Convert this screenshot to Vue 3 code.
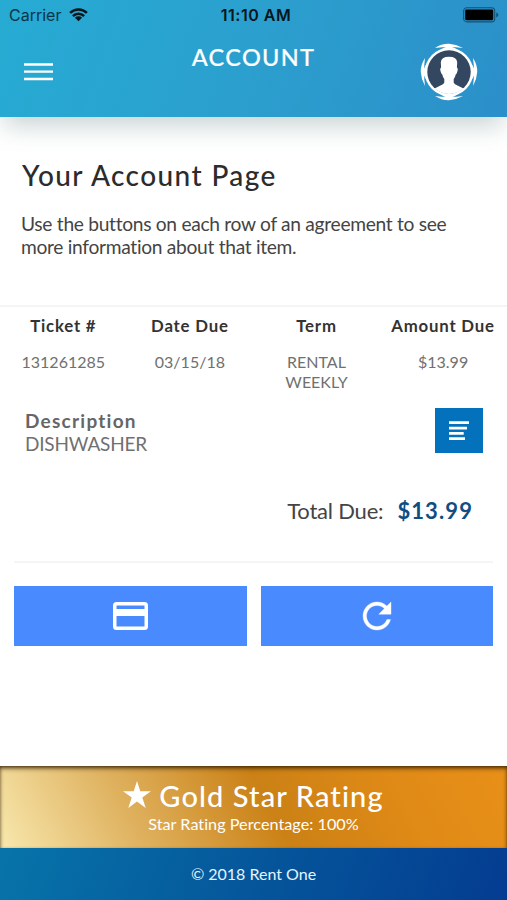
<script setup>
const columns = [
  { label: 'Ticket #', value: '131261285' },
  { label: 'Date Due', value: '03/15/18' },
  { label: 'Term', value: 'RENTAL WEEKLY' },
  { label: 'Amount Due', value: '$13.99' },
]
</script>

<template>
  <div class="screen">
    <header class="header">
      <div class="status">
        <div class="carrier">
          <span class="carrier-name">Carrier</span>
          <svg class="wifi" viewBox="0 0 20 15">
            <path d="M1 5.2a12.8 12.8 0 0 1 18 0M4 8.6a8.5 8.5 0 0 1 12 0" fill="none" stroke="#07151c" stroke-width="2.7" />
            <path d="M6.2 10.4a5.4 5.4 0 0 1 7.6 0L10 14.2z" fill="#07151c" />
          </svg>
        </div>
        <span class="time">11:10 AM</span>
        <svg class="battery" viewBox="0 0 36 16">
          <rect x=".7" y=".7" width="31" height="14.2" rx="3.2" fill="none" stroke="#155273" stroke-width="1.1" />
          <rect x="2.2" y="2.4" width="28" height="10.9" rx="1.4" fill="#000" />
          <path d="M33.2 5.4c2.8.8 2.8 4 0 4.8z" fill="#155273" />
        </svg>
      </div>
      <div class="bar">
        <svg class="menu" viewBox="0 0 29 18">
          <path d="M0 1.5h29M0 8.7h29M0 16h29" stroke="#fff" stroke-width="2.3" />
        </svg>
        <h1 class="title">ACCOUNT</h1>
        <svg class="avatar" viewBox="0 0 58 58">
          <defs>
            <clipPath id="face"><circle cx="29" cy="29" r="22" /></clipPath>
          </defs>
          <g fill="#fff">
            <path d="M15 5Q22 .5 29 .8T43 5Q36 4 29 4T15 5z" />
            <path d="M15 53Q22 57.5 29 57.2T43 53Q36 54 29 54T15 53z" />
            <path d="M5 15Q.5 22 .8 29T5 43Q4 36 4 29T5 15z" />
            <path d="M53 15Q57.5 22 57.2 29T53 43Q54 36 54 29T53 15z" />
            <circle cx="29" cy="29" r="24.2" />
            <path d="M19 8Q29 -1 39 8zM19 50Q29 59 39 50zM8 19Q-1 29 8 39zM50 19Q59 29 50 39z" />
          </g>
          <circle cx="29" cy="29" r="21.7" fill="#344760" />
          <path clip-path="url(#face)" fill="#fff" d="M20.8 19.5Q21 13.7 29 13.7T37.2 19.5L36.9 24.5Q38.5 25.5 37.2 29Q36.6 31 35.7 31.5Q35.3 34 33.7 36V39.5Q34 41 38.5 43L44 45.8Q46 47 46 52H12Q12 47 14 45.8L19.5 43Q24 41 24.3 39.5V36Q22.7 34 22.3 31.5Q21.4 31 20.8 29Q19.5 25.5 21.1 24.5z" />
        </svg>
      </div>
    </header>

    <main class="content">
      <section class="intro">
        <h2 class="heading">Your Account Page</h2>
        <p class="lead">Use the buttons on each row of an agreement to see more information about that item.</p>
      </section>

      <section class="agreement">
        <div class="grid">
          <div v-for="c in columns" :key="c.label" class="col">
            <div class="label">{{ c.label }}</div>
            <div class="value">{{ c.value }}</div>
          </div>
        </div>
        <div class="item">
          <div>
            <div class="desc-label">Description</div>
            <div class="desc">DISHWASHER</div>
          </div>
          <button class="details" aria-label="Details">
            <svg viewBox="0 0 20 20">
              <path d="M0 1.6h20M0 7.1h18M0 12.3h14.7M0 17.7h16" stroke="#fff" stroke-width="2.8" />
            </svg>
          </button>
        </div>
        <div class="total">
          <span class="total-label">Total Due:</span>
          <span class="total-value">$13.99</span>
        </div>
      </section>

      <div class="actions">
        <button class="action" aria-label="Pay">
          <svg class="card" viewBox="0 0 35 28">
            <path fill="#fff" fill-rule="evenodd" d="M3.5 0h28Q35 0 35 3.5v21Q35 28 31.5 28h-28Q0 28 0 24.5v-21Q0 0 3.5 0zM3.5 3.5v3.5h28V3.5zM3.5 14v10.5h28V14z" />
          </svg>
        </button>
        <button class="action" aria-label="Refresh">
          <svg class="refresh" viewBox="4 4 16 16">
            <path fill="#fff" stroke="#fff" stroke-width=".2" d="M17.65 6.35C16.2 4.9 14.21 4 12 4c-4.42 0-7.99 3.58-7.99 8s3.57 8 7.99 8c3.73 0 6.84-2.55 7.73-6h-2.08c-.82 2.33-3.04 4-5.65 4-3.31 0-6-2.69-6-6s2.69-6 6-6c1.66 0 3.14.69 4.22 1.78L13 11h7V4l-2.35 2.35z" />
          </svg>
        </button>
      </div>
    </main>

    <section class="rating">
      <div class="rating-title">
        <svg class="star" viewBox="0 0 28 27">
          <path fill="#fff" d="M14 0l3.3 10.2H28l-8.7 6.4L22.7 27 14 20.6 5.3 27l3.4-10.4L0 10.2h10.7z" />
        </svg>
        <span>Gold Star Rating</span>
      </div>
      <div class="rating-sub">Star Rating Percentage: 100%</div>
    </section>
    <footer class="footer">© 2018 Rent One</footer>
  </div>
</template>

<style>
body {
  margin: 0;
  background: #fff;
}
</style>

<style scoped>
.screen {
  width: 507px;
  height: 900px;
  display: flex;
  flex-direction: column;
  overflow: hidden;
  background: #fff;
  color: #333;
  font-family: Lato, sans-serif;
}
h1, h2, p {
  margin: 0;
}
svg {
  display: block;
}
button {
  border: 0;
  padding: 0;
  display: flex;
  align-items: center;
  justify-content: center;
}
.header {
  box-sizing: border-box;
  height: 117px;
  flex: none;
  background: linear-gradient(110deg, #26abd3 0%, #2b9fce 50%, #2b8fc9 100%);
  box-shadow: 0 12px 24px -4px rgba(80, 112, 116, .32);
}
.status {
  height: 30px;
  padding: 0 8px 0 9px;
  display: grid;
  grid-template-columns: 1fr auto 1fr;
  align-items: center;
  font-family: Inter, sans-serif;
  font-size: 16px;
  color: #07151c;
}
.carrier {
  display: flex;
  align-items: center;
  gap: 8px;
}
.carrier-name {
  color: #0c3447;
}
.wifi {
  width: 19px;
  height: 14px;
}
.time {
  padding-left: 4px;
  font-weight: 600;
  letter-spacing: .5px;
}
.battery {
  width: 36px;
  height: 16px;
  justify-self: end;
}
.bar {
  height: 87px;
  padding: 0 29px 0 24px;
  display: grid;
  grid-template-columns: 1fr auto 1fr;
}
.menu {
  width: 29px;
  height: 18px;
  margin-top: 33px;
}
.title {
  margin-top: 12px;
  padding-left: 5px;
  color: #fff;
  font-size: 23.5px;
  line-height: 30px;
  font-weight: 500;
  letter-spacing: 1.3px;
  -webkit-text-stroke: .2px #fff;
}
.avatar {
  width: 58px;
  height: 58px;
  margin-top: 13px;
  justify-self: end;
}
.content {
  flex: 1;
}
.intro {
  box-sizing: border-box;
  height: 188px;
  padding: 41px 40px 0 21px;
}
.heading {
  padding-left: 1px;
  font-size: 28px;
  line-height: 34px;
  font-weight: 500;
  letter-spacing: 1.4px;
  color: #2c2c2c;
}
.lead {
  margin-top: 20px;
  font-size: 19.2px;
  line-height: 23px;
  letter-spacing: -.3px;
  color: #444;
}
.agreement {
  box-sizing: border-box;
  height: 256px;
  border-top: 2px solid #f5f5f5;
}
.grid {
  height: 100px;
  display: grid;
  grid-template-columns: repeat(4, 126.6px);
  text-align: center;
}
.label {
  margin-top: 8px;
  font-size: 16.8px;
  line-height: 22px;
  font-weight: 700;
  letter-spacing: .8px;
  white-space: nowrap;
}
.value {
  margin: 15px 20px 0;
  font-size: 16px;
  line-height: 20px;
  color: #707070;
}
.item {
  height: 46px;
  padding: 1px 24px 0 25px;
  display: flex;
  justify-content: space-between;
}
.desc-label {
  margin-top: 1px;
  font-size: 19px;
  line-height: 23px;
  font-weight: 700;
  letter-spacing: 1.25px;
  color: #666;
}
.desc {
  font-size: 19px;
  line-height: 23px;
  letter-spacing: -.2px;
  color: #707070;
}
.details {
  width: 48px;
  height: 45px;
  background: #0471bd;
}
.details svg {
  width: 20px;
  height: 20px;
}
.total {
  margin: 42px 34px 0 0;
  display: flex;
  justify-content: flex-end;
  align-items: baseline;
  gap: 14px;
  font-size: 22px;
  line-height: 30px;
}
.total-label {
  letter-spacing: -.2px;
  color: #444;
}
.total-value {
  font-weight: 700;
  letter-spacing: 1.1px;
  color: #114d83;
}
.actions {
  margin: 0 14px;
  padding-top: 23px;
  border-top: 2px solid #f5f5f5;
  display: grid;
  grid-template-columns: 1fr 1fr;
  gap: 14px;
}
.action {
  height: 60px;
  background: #4a8aff;
}
.card {
  width: 35px;
  height: 28px;
}
.refresh {
  width: 28px;
  height: 28px;
  overflow: visible;
}
.rating {
  box-sizing: border-box;
  height: 82px;
  padding-top: 12px;
  color: #fff;
  text-align: center;
  background: linear-gradient(62deg, #f8e8ae 0%, #e0b463 25%, #cb8115 53%, #e08a17 78%, #e89017 100%);
  box-shadow: inset 0 3px 5px -1px rgba(50, 30, 0, .8), inset 0 1px 3px rgba(60, 40, 0, .45);
}
.rating-title {
  display: flex;
  justify-content: center;
  align-items: center;
  gap: 8px;
  font-size: 29px;
  line-height: 35px;
  font-weight: 500;
  letter-spacing: 1.1px;
}
.star {
  width: 28px;
  height: 27px;
  margin-top: -3px;
}
.rating-sub {
  margin-top: 1px;
  font-size: 16.2px;
  line-height: 20px;
  letter-spacing: .03px;
}
.footer {
  height: 52px;
  color: #e6f4ff;
  text-align: center;
  font-size: 16px;
  line-height: 52px;
  background: linear-gradient(110deg, #0774a9 0%, #05559a 52%, #043c91 100%);
}
</style>
